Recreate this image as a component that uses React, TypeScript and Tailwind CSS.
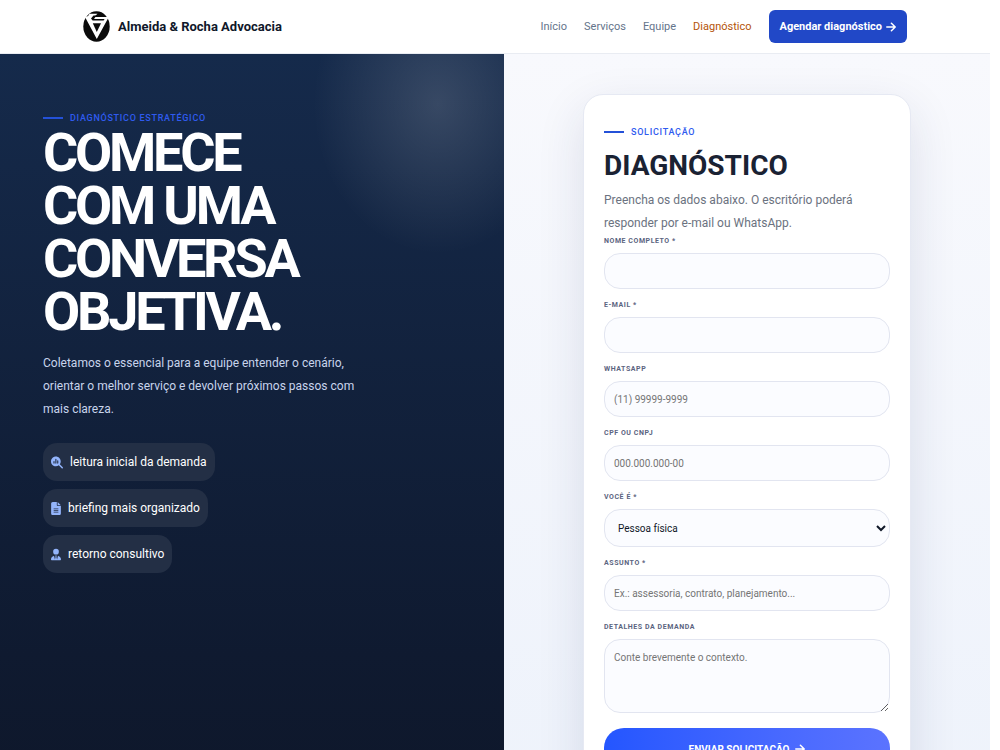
import type { ReactNode } from 'react';
import { FaFileLines, FaMagnifyingGlassChart, FaUserTie } from 'react-icons/fa6';

const NAV_LINKS = [
  { label: 'Início', href: '#inicio' },
  { label: 'Serviços', href: '#servicos' },
  { label: 'Equipe', href: '#equipe' },
  { label: 'Diagnóstico', href: '#diagnostico', active: true },
];

const BENEFITS = [
  { icon: FaMagnifyingGlassChart, size: 'h-[13px] w-3', text: 'leitura inicial da demanda' },
  { icon: FaFileLines, size: 'h-[13px] w-2.5', text: 'briefing mais organizado' },
  { icon: FaUserTie, size: 'h-[13px] w-2.5', text: 'retorno consultivo' },
];

const CONTROL =
  'block w-full rounded-2xl border border-[#e2e5f0] bg-[#fbfcff] px-[9px] text-[10px] text-gray-900 placeholder:text-[#757575] outline-none focus:border-blue-500';

function Logo() {
  return (
    <svg viewBox="0 0 27 31" className="h-[31px] w-[27px]" aria-hidden="true">
      <ellipse cx="13.5" cy="15.5" rx="13.2" ry="15.2" fill="#0b0b0b" />
      <path d="M2 6 H8 L11.5 2.8 H5.5 L7 4.6 M2 6 L13.8 28 L25.8 6 H11 L14.5 2.8 H7 L4 6 Z" fill="#fff" />
      <path d="M10.5 4.6 L8 7.6 L9.6 9.6 H20.6 L21.6 8 H11 L13.5 4.6 Z" fill="#0b0b0b" />
      <path d="M9.8 12.2 L13.8 21 L18 12.2 Z" fill="#0b0b0b" />
    </svg>
  );
}

function Arrow() {
  return (
    <svg viewBox="0 0 10 10" className="size-2.5" fill="none" stroke="currentColor" strokeWidth="1.5" aria-hidden="true">
      <path d="M0.8 5 H9 M5.4 1.2 L9.2 5 L5.4 8.8" strokeLinecap="round" strokeLinejoin="round" />
    </svg>
  );
}

function Header() {
  return (
    <header className="border-b border-[#e9ecf2] bg-white px-4">
      <div className="mx-auto flex h-[53px] max-w-[824px] items-center justify-between">
        <a href="#inicio" className="flex items-center gap-2">
          <Logo />
          <span className="text-[13px] font-bold text-[#0f172a]">Almeida &amp; Rocha Advocacia</span>
        </a>
        <nav className="flex items-center gap-[17px] text-[11px] leading-4">
          {NAV_LINKS.map((link) => (
            <a key={link.href} href={link.href} className={link.active ? 'text-[#b45309]' : 'text-[#64748b]'}>
              {link.label}
            </a>
          ))}
          <a
            href="#diagnostico"
            className="flex h-[33px] items-center gap-1 rounded-md bg-[#2148c7] px-[11px] font-bold text-white"
          >
            Agendar diagnóstico
            <Arrow />
          </a>
        </nav>
      </div>
    </header>
  );
}

function Eyebrow({ children }: { children: ReactNode }) {
  return (
    <p className="flex items-center gap-[7px] text-[9px] leading-3 font-medium tracking-[0.08em] text-[#2f5bef] uppercase">
      <span className="h-0.5 w-5 bg-[#2451d8]" />
      {children}
    </p>
  );
}

function Hero() {
  return (
    <section className="bg-[radial-gradient(125px_150px_at_438px_50px,#ffffff26,transparent),linear-gradient(180deg,#152a4b,#0f1a30_600px,#0e1628)] px-[43px] pt-[58px] pb-16 text-white">
      <Eyebrow>Diagnóstico estratégico</Eyebrow>
      <h1 className="mt-0.5 text-[54px] leading-[53px] font-bold tracking-[-0.06em] uppercase">
        Comece
        <br />
        com uma
        <br />
        conversa
        <br />
        objetiva.
      </h1>
      <p className="mt-3.5 max-w-[330px] text-xs leading-[23px] text-[#c8d4ec]">
        Coletamos o essencial para a equipe entender o cenário, orientar o melhor serviço e devolver próximos passos com
        mais clareza.
      </p>
      <ul className="mt-[22px] flex flex-col items-start gap-2">
        {BENEFITS.map(({ icon: Icon, size, text }) => (
          <li key={text} className="flex h-[38px] items-center gap-[7px] rounded-[14px] bg-[#232f45] px-2 text-xs">
            <Icon className={`${size} text-[#93b4fb]`} />
            {text}
          </li>
        ))}
      </ul>
    </section>
  );
}

function Field({ id, label, children }: { id: string; label: string; children: ReactNode }) {
  return (
    <div>
      <label htmlFor={id} className="mb-1.5 block text-[7px] leading-3 font-bold tracking-[0.08em] text-[#5b6480] uppercase">
        {label}
      </label>
      {children}
    </div>
  );
}

function RequestForm() {
  return (
    <form className="mx-auto max-w-[328px] rounded-[20px] border border-[#e6e9f3] bg-white px-5 pt-[31px] pb-8 shadow-[0_16px_48px_#1e2a5a1f]">
      <Eyebrow>Solicitação</Eyebrow>
      <h2 className="mt-2.5 text-[28px] leading-9 font-bold text-[#1a2233] uppercase">Diagnóstico</h2>
      <p className="mt-[5px] text-xs leading-[23px] text-[#6b7280]">
        Preencha os dados abaixo. O escritório poderá responder por e-mail ou WhatsApp.
      </p>
      <div className="flex flex-col gap-2.5">
        <Field id="nome" label="Nome completo *">
          <input id="nome" type="text" required className={`${CONTROL} h-9`} />
        </Field>
        <Field id="email" label="E-mail *">
          <input id="email" type="email" required className={`${CONTROL} h-9`} />
        </Field>
        <Field id="whatsapp" label="WhatsApp">
          <input id="whatsapp" type="tel" placeholder="(11) 99999-9999" className={`${CONTROL} h-9`} />
        </Field>
        <Field id="documento" label="CPF ou CNPJ">
          <input id="documento" type="text" placeholder="000.000.000-00" className={`${CONTROL} h-9`} />
        </Field>
        <Field id="perfil" label="Você é *">
          <select id="perfil" required className={`${CONTROL} h-[38px] pr-0`}>
            <option>Pessoa física</option>
            <option>Pessoa jurídica</option>
          </select>
        </Field>
        <Field id="assunto" label="Assunto *">
          <input
            id="assunto"
            type="text"
            required
            placeholder="Ex.: assessoria, contrato, planejamento..."
            className={`${CONTROL} h-9`}
          />
        </Field>
        <Field id="detalhes" label="Detalhes da demanda">
          <textarea
            id="detalhes"
            placeholder="Conte brevemente o contexto."
            className={`${CONTROL} h-[74px] resize-y py-2.5`}
          />
        </Field>
      </div>
      <button
        type="submit"
        className="mt-[15px] flex h-[42px] w-full items-center justify-center gap-1.5 rounded-[20px] bg-linear-to-r from-[#2456ff] to-[#5b73ff] text-[10px] font-bold text-white uppercase"
      >
        Enviar solicitação
        <Arrow />
      </button>
    </form>
  );
}

export default function App() {
  return (
    <div className="min-h-screen bg-white pr-2.5 font-['Roboto',sans-serif]">
      <Header />
      <main className="grid grid-cols-[28fr_27fr]">
        <Hero />
        <section className="bg-linear-to-b from-[#f8f9fd] to-[#edf2fb] px-6 pt-10 pb-16">
          <RequestForm />
        </section>
      </main>
    </div>
  );
}
